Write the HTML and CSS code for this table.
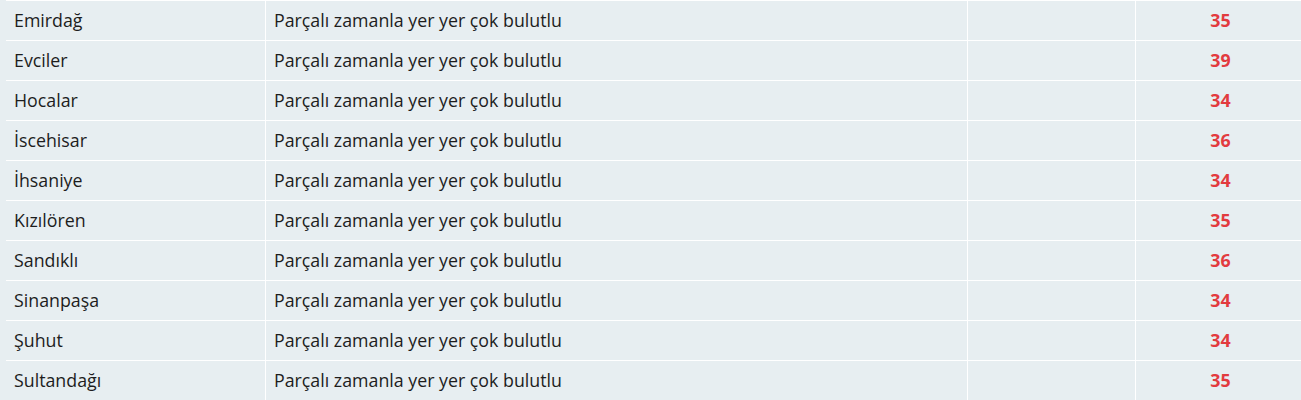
FILE: index.html
```html
<!DOCTYPE html>
<html lang="tr">
<head>
<meta charset="utf-8">
<link rel="stylesheet" href="styles.css">
</head>
<body>
<div class="table">
  <div class="row"><div class="cell name">Emirdağ</div><div class="cell desc">Parçalı zamanla yer yer çok bulutlu</div><div class="cell empty"></div><div class="cell temp">35</div></div>
  <div class="row"><div class="cell name">Evciler</div><div class="cell desc">Parçalı zamanla yer yer çok bulutlu</div><div class="cell empty"></div><div class="cell temp">39</div></div>
  <div class="row"><div class="cell name">Hocalar</div><div class="cell desc">Parçalı zamanla yer yer çok bulutlu</div><div class="cell empty"></div><div class="cell temp">34</div></div>
  <div class="row"><div class="cell name">İscehisar</div><div class="cell desc">Parçalı zamanla yer yer çok bulutlu</div><div class="cell empty"></div><div class="cell temp">36</div></div>
  <div class="row"><div class="cell name">İhsaniye</div><div class="cell desc">Parçalı zamanla yer yer çok bulutlu</div><div class="cell empty"></div><div class="cell temp">34</div></div>
  <div class="row"><div class="cell name">Kızılören</div><div class="cell desc">Parçalı zamanla yer yer çok bulutlu</div><div class="cell empty"></div><div class="cell temp">35</div></div>
  <div class="row"><div class="cell name">Sandıklı</div><div class="cell desc">Parçalı zamanla yer yer çok bulutlu</div><div class="cell empty"></div><div class="cell temp">36</div></div>
  <div class="row"><div class="cell name">Sinanpaşa</div><div class="cell desc">Parçalı zamanla yer yer çok bulutlu</div><div class="cell empty"></div><div class="cell temp">34</div></div>
  <div class="row"><div class="cell name">Şuhut</div><div class="cell desc">Parçalı zamanla yer yer çok bulutlu</div><div class="cell empty"></div><div class="cell temp">34</div></div>
  <div class="row"><div class="cell name">Sultandağı</div><div class="cell desc">Parçalı zamanla yer yer çok bulutlu</div><div class="cell empty"></div><div class="cell temp">35</div></div>
</div>
</body>
</html>
```
FILE: styles.css
```css
html, body {
  margin: 0;
  padding: 0;
  background: #e7eef1;
  overflow: hidden;
}
body {
  font-family: "Open Sans", "DejaVu Sans", sans-serif;
  font-size: 17.8px;
  color: #1d1d1d;
}
.table {
  margin-left: 6px;
  display: flex;
  flex-direction: column;
}
.row {
  display: grid;
  grid-template-columns: 260px 702px 168px 1fr;
  height: 40px;
  box-sizing: border-box;
  border-top: 1px solid #ffffff;
}
.cell {
  box-sizing: border-box;
  display: flex;
  align-items: center;
  padding: 0 8px 1px;
  border-right: 1px solid #ffffff;
  white-space: nowrap;
}
.cell.temp {
  border-right: none;
  justify-content: center;
  padding-left: 12px;
  font-weight: 700;
  color: #e23b3f;
}
```
